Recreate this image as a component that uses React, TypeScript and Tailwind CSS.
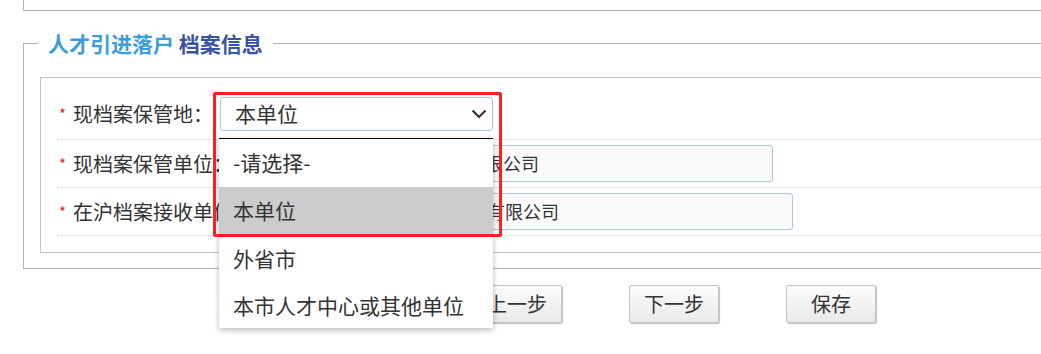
import type { ReactNode } from 'react';

const OPTIONS = ['-请选择-', '本单位', '外省市', '本市人才中心或其他单位'];

function Row({ label, children, lift }: { label: string; children: ReactNode; lift?: boolean }) {
  return (
    <div
      className={`flex h-[48px] items-center border-b border-dotted border-[#cccccc] ${lift ? 'pb-[4px]' : ''}`}
    >
      <span className="w-[16px] pl-[2px] text-[15px] leading-none text-[#e8262a]">*</span>
      <span className="text-[20px] leading-none text-[#333333]">{label}</span>
      <div className="ml-[7px]">{children}</div>
    </div>
  );
}

function TextInput({ value }: { value: string }) {
  return (
    <div className="flex h-[37px] w-[533px] items-center rounded-[3px] border border-[#a9c8e8] bg-[#fafafa] pl-[10px] text-[18px] text-[#333333]">
      {value}
    </div>
  );
}

function Button({ children }: { children: ReactNode }) {
  return (
    <button className="flex h-[38px] w-[90px] items-center justify-center rounded-[2px] border border-[#c4c4c4] bg-gradient-to-b from-[#fcfcfc] to-[#e9e9e9] text-[20px] text-[#333333] shadow-[1px_1px_1px_rgba(0,0,0,0.25)]">
      {children}
    </button>
  );
}

export default function App() {
  return (
    <div className="relative h-[354px] w-full overflow-hidden bg-white font-['Noto_Sans_CJK_SC','Noto_Sans',sans-serif]">
      <div className="ml-[23px] h-[11px] border-b border-l border-[#b4b4b4]" />

      <fieldset className="ml-[23px] mt-[18px] w-[1100px] border border-[#b4b4b4]">
        <legend className="ml-[14px] px-[10px] text-[21px] font-bold leading-[28px]">
          <span className="text-[#3d9ddb]">人才引进落户</span>{' '}
          <span className="text-[#3a52a2]">档案信息</span>
        </legend>

        <div className="mb-[15px] ml-[16px] mt-[20px] border border-[#c4c4c4] px-[16px] pb-[16px] pt-[14px]">
          <Row label="现档案保管地：" lift>
            <div className="flex h-[34px] w-[273px] items-center justify-between rounded-[3px] border border-[#a9c6e6] bg-white pl-[14px] pr-[5px] text-[21px] text-[#333333]">
              <span>本单位</span>
              <svg width="16" height="10" viewBox="0 0 16 10" fill="none">
                <path d="M1.5 1.5 L8 8 L14.5 1.5" stroke="#333333" strokeWidth="2.2" />
              </svg>
            </div>
          </Row>
          <Row label="现档案保管单位：">
            <TextInput value="上海某某人力资源开发服务有限公司" />
          </Row>
          <Row label="在沪档案接收单位：">
            <TextInput value="上海某某人才信息咨询服务有限公司" />
          </Row>
        </div>
      </fieldset>

      <div className="ml-[472px] mt-[16px] flex gap-[67px]">
        <Button>上一步</Button>
        <Button>下一步</Button>
        <Button>保存</Button>
      </div>

      {/* open select list */}
      <ul className="absolute left-[219px] top-[138px] w-[274px] border-t border-black bg-white shadow-[0_2px_6px_rgba(0,0,0,0.28)]">
        {OPTIONS.map((opt, i) => (
          <li
            key={opt}
            className={`flex items-center pl-[14px] text-[21px] text-[#333333] ${
              i === 1 ? 'bg-[#cccccc]' : ''
            } ${i === 3 ? 'h-[45px]' : 'h-[48px]'}`}
          >
            {opt}
          </li>
        ))}
      </ul>

      {/* highlight */}
      <div className="pointer-events-none absolute left-[213px] top-[92px] h-[145px] w-[289px] rounded-[2px] border-[3px] border-[#ff1f1f]" />
    </div>
  );
}
